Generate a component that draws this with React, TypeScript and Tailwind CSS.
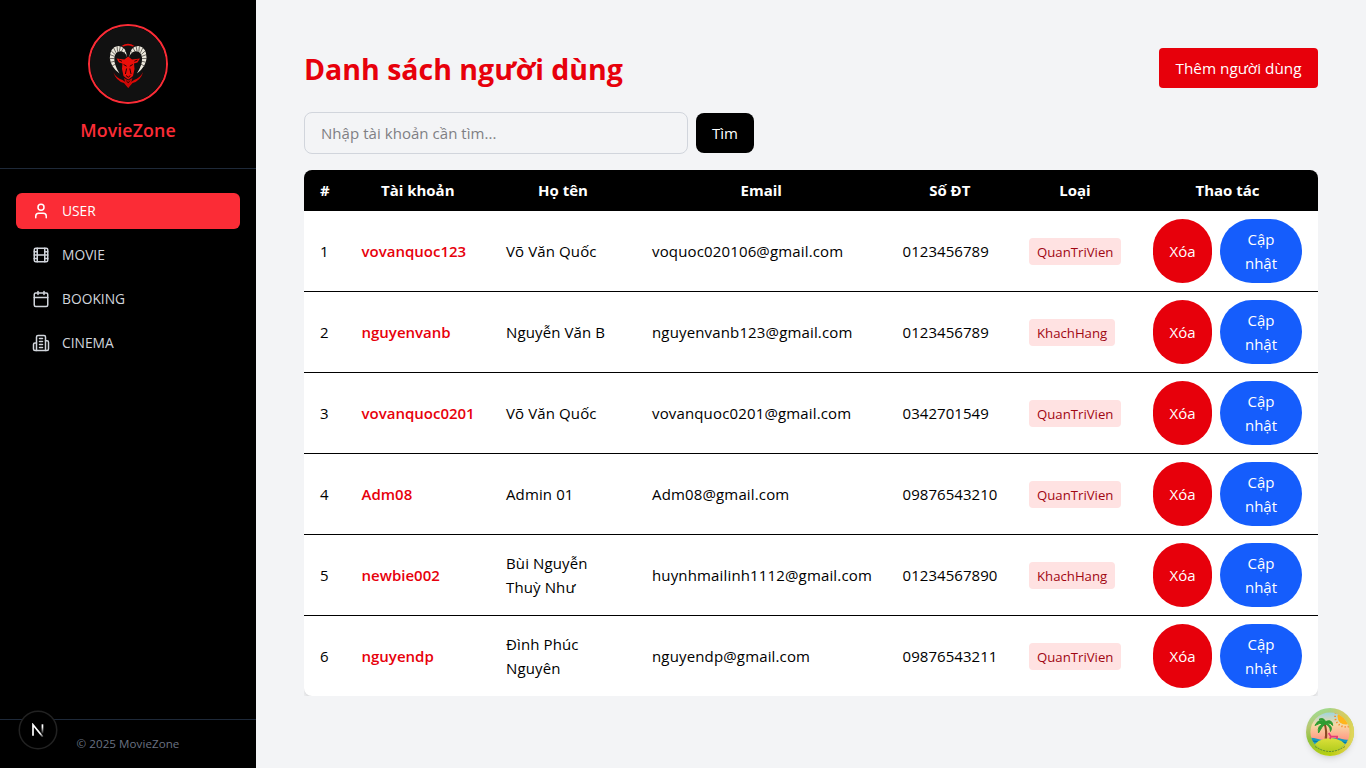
import { User, Film, Calendar } from "lucide-react";

function Building({ size = 18 }: { size?: number }) {
  return (
    <svg
      width={size}
      height={size}
      viewBox="0 0 24 24"
      fill="none"
      stroke="currentColor"
      strokeWidth="2"
      strokeLinecap="round"
      strokeLinejoin="round"
    >
      <path d="M6 22V4a2 2 0 0 1 2-2h8a2 2 0 0 1 2 2v18Z" />
      <path d="M6 12H4a2 2 0 0 0-2 2v6a2 2 0 0 0 2 2h2" />
      <path d="M18 9h2a2 2 0 0 1 2 2v9a2 2 0 0 1-2 2h-2" />
      <path d="M10 6h4" />
      <path d="M10 10h4" />
      <path d="M10 14h4" />
      <path d="M10 18h4" />
    </svg>
  );
}

const nav = [
  { label: "USER", Icon: User, active: true },
  { label: "MOVIE", Icon: Film, active: false },
  { label: "BOOKING", Icon: Calendar, active: false },
  { label: "CINEMA", Icon: Building, active: false },
];

const users = [
  { account: "vovanquoc123", name: "Võ Văn Quốc", email: "voquoc020106@gmail.com", phone: "0123456789", role: "QuanTriVien" },
  { account: "nguyenvanb", name: "Nguyễn Văn B", email: "nguyenvanb123@gmail.com", phone: "0123456789", role: "KhachHang" },
  { account: "vovanquoc0201", name: "Võ Văn Quốc", email: "vovanquoc0201@gmail.com", phone: "0342701549", role: "QuanTriVien" },
  { account: "Adm08", name: "Admin 01", email: "Adm08@gmail.com", phone: "09876543210", role: "QuanTriVien" },
  { account: "newbie002", name: "Bùi Nguyễn Thuỳ Như", email: "huynhmailinh1112@gmail.com", phone: "01234567890", role: "KhachHang" },
  { account: "nguyendp", name: "Đình Phúc Nguyên", email: "nguyendp@gmail.com", phone: "09876543211", role: "QuanTriVien" },
];

function Horn() {
  return (
    <>
      <path
        d="M37.2 31.5Q35.5 25.5 30.5 25.3Q25 25.5 24.3 32Q24 39 29.5 47.5Q20.5 41 19.8 32Q20 21.5 27.5 20Q36 19.5 37.2 31.5Z"
        fill="#ece8dc"
      />
      <path
        d="M35.8 25L33 27.8M33.4 22L31 26M30.4 20L29.2 25.6M27 19.8L27.6 25.8M23.6 21.8L26 26.8M21.2 25L25 28.4M20 28.6L24.6 30.4M19.4 32.4L24.6 32.6M20 36.4L24.8 35.2M21.6 40.2L25.8 38"
        stroke="#33312c"
        strokeWidth="0.7"
      />
    </>
  );
}

function Logo() {
  return (
    <svg viewBox="0 0 76 76" className="size-full">
      <circle cx="38" cy="38" r="38" fill="#111111" />
      <path d="M31.5 20Q38 15.5 44.5 20L42.5 20.6Q38 18.4 33.5 20.6Z" fill="#e3100c" />
      <path d="M23.3 46Q26 55 34 57L38.2 62L42.5 57Q50.5 55 53.2 46Q50 52 44 54L38.2 58L32.5 54Q26 52 23.3 46Z" fill="#dd0806" />
      <Horn />
      <g transform="matrix(-1 0 0 1 76.4 0)">
        <Horn />
      </g>
      <path d="M38.2 30.5L42 33.5L50 32.5L47.5 36.5L44 37.5L44.5 43L43 50L40.5 52L38.2 53.5L36 52L33.5 50L32 43L32.4 37.5L29 36.5L26.5 32.5L34.4 33.5Z" fill="#ea0f0a" />
      <path d="M29 34L32 35.3M47.4 34L44.4 35.3M33.6 38.5L36.6 40.2M42.8 38.5L39.8 40.2M36.6 42.5L35.4 48M39.8 42.5L41 48M36 49.5L38.2 51.3L40.4 49.5" stroke="#260303" strokeWidth="1" fill="none" />
      <path d="M34 52L38.2 54.6L42.4 52L41 57L38.2 61.5L35.4 57Z" fill="#c90806" />
      <path d="M36.4 54.5L38.2 57L40 54.5" stroke="#260303" strokeWidth="0.8" fill="none" />
    </svg>
  );
}

function Island() {
  return (
    <svg viewBox="0 0 48 48" className="size-12">
      <defs>
        <linearGradient id="ring" x1="0" y1="0" x2="0.4" y2="1">
          <stop offset="0" stopColor="#8fe5a0" />
          <stop offset="0.35" stopColor="#b9c873" />
          <stop offset="0.6" stopColor="#8fc33c" />
          <stop offset="1" stopColor="#b7cf10" />
        </linearGradient>
        <linearGradient id="ring2" x1="0" y1="0" x2="1" y2="0">
          <stop offset="0.5" stopColor="#f7c65c" stopOpacity="0" />
          <stop offset="1" stopColor="#e3d75e" />
        </linearGradient>
        <linearGradient id="sky" x1="0" y1="0" x2="0" y2="1">
          <stop offset="0" stopColor="#7fd3f3" />
          <stop offset="0.35" stopColor="#f8d9a4" />
          <stop offset="0.65" stopColor="#ff9c86" />
        </linearGradient>
        <linearGradient id="hill" x1="0" y1="0" x2="0" y2="1">
          <stop offset="0" stopColor="#dce03a" />
          <stop offset="1" stopColor="#a3c514" />
        </linearGradient>
        <clipPath id="inner"><circle cx="24" cy="24" r="19.6" /></clipPath>
      </defs>
      <circle cx="24" cy="24" r="24" fill="url(#ring)" />
      <circle cx="24" cy="24" r="24" fill="url(#ring2)" />
      <g clipPath="url(#inner)">
        <rect width="48" height="48" fill="url(#sky)" />
        <circle cx="39.5" cy="8.5" r="8" fill="#ffb51c" />
        <circle cx="39.5" cy="8.5" r="10.4" fill="none" stroke="#f58a2c" strokeWidth="1.8" strokeDasharray="1.2 2" />
        <path d="M0 30Q6 29 12 31T24 31T36 31T48 30V48H0Z" fill="#149bc0" />
        <path d="M0 34Q6 32 12 34T24 34T36 34T48 33" stroke="#087aa0" strokeWidth="1.2" fill="none" />
        <path d="M5 41Q12 30 24 30Q36 30 43 41L38 48H10Z" fill="url(#hill)" />
        <path d="M18.6 30.5Q20 23 17.4 15L19.4 15Q22 23 21 30.5Z" fill="#8b4a24" />
        <path
          d="M18.5 14.5Q13 9.5 9 17.5Q13.5 14.5 18 15.5Q11 17 12.5 25Q16 18.5 18.8 16Q24 17 24.5 23.5Q27.5 18.5 20.5 15Q25 14.5 26.8 17.5Q26 10.5 19.6 13.6Q17.5 9 13 11.3Q17 11.8 18.5 14.5Z"
          fill="#2f9c31"
          stroke="#2f9c31"
          strokeWidth="1"
        />
        <path d="M22.6 25L25 28.6H32M25 28L24 31M31 29V31" stroke="#e43d76" strokeWidth="1.7" fill="none" />
      </g>
      <path d="M9 38.5Q24 48.5 39 38.5" fill="none" stroke="#5c8d12" strokeWidth="0.8" strokeDasharray="2 1" />
    </svg>
  );
}

export default function App() {
  return (
    <div className="flex h-screen overflow-hidden bg-gray-100 font-['Open_Sans','Noto_Sans',sans-serif] text-[15px] leading-6 text-black">
      <aside className="flex w-64 shrink-0 flex-col bg-black">
        <div className="flex flex-col items-center border-b border-gray-800 p-6">
          <div className="size-20 overflow-hidden rounded-full border-2 border-[#fb2c36]">
            <Logo />
          </div>
          <h2 className="mt-3 text-[17.8px] leading-[29px] -mb-px font-semibold tracking-[0.1px] text-[#fb2c36]">MovieZone</h2>
        </div>
        <nav className="flex flex-1 flex-col gap-2 px-4 py-6">
          {nav.map(({ label, Icon, active }) => (
            <a
              key={label}
              className={
                active
                  ? "flex h-9 items-center gap-3 rounded-md bg-[#fb2c36] px-4 text-[13.8px] text-white"
                  : "flex h-9 items-center gap-3 rounded-md px-4 text-[13.8px] text-gray-300"
              }
            >
              <Icon size={18} />
              <span>{label}</span>
            </a>
          ))}
        </nav>
        <div className="border-t border-gray-800 p-4 text-center text-[11.6px] leading-4 tracking-[0.05px] text-gray-500">
          <p>© 2025 MovieZone</p>
        </div>
      </aside>

      <main className="flex-1 p-12">
        <div className="flex h-10 items-center justify-between">
          <h1 className="pt-0.5 text-[28.5px] leading-9 font-bold text-[#e7000b]">Danh sách người dùng</h1>
          <button className="h-10 w-[159px] rounded bg-[#e7000b] text-[15.3px] text-white">Thêm người dùng</button>
        </div>
        <div className="mt-6 flex items-center gap-2">
          <input
            className="h-[42px] w-96 rounded-lg border border-gray-300 px-4 tracking-[0.05px] placeholder:text-[#7f7f84]"
            placeholder="Nhập tài khoản cần tìm..."
          />
          <button className="h-10 w-[58px] rounded-lg bg-black text-white">Tìm</button>
        </div>
        <div className="mt-4 overflow-hidden">
          <div className="overflow-hidden rounded-lg bg-white shadow-md">
            <table className="w-full table-fixed border-collapse">
              <colgroup>
                <col className="w-[41.5px]" />
                <col className="w-[144.5px]" />
                <col className="w-[146px]" />
                <col className="w-[250.5px]" />
                <col className="w-[126.5px]" />
                <col className="w-[124px]" />
                <col className="w-[181px]" />
              </colgroup>
              <thead className="bg-black text-white">
                <tr className="h-[41px]">
                  {["#", "Tài khoản", "Họ tên", "Email", "Số ĐT", "Loại", "Thao tác"].map((h) => (
                    <th key={h} className="p-0 pb-0.5 font-bold">{h}</th>
                  ))}
                </tr>
              </thead>
              <tbody>
                {users.map((u, i) => (
                  <tr key={u.account} className="border-b border-black last:border-b-0">
                    <td className="px-4 py-2">{i + 1}</td>
                    <td className="px-4 py-2 font-semibold text-[#e7000b]">{u.account}</td>
                    <td className="px-4 py-2 tracking-[0.12px]">{u.name}</td>
                    <td className="px-4 py-2 tracking-[0.15px]">{u.email}</td>
                    <td className="px-4 py-2 tracking-[0.05px]">{u.phone}</td>
                    <td className="px-4 py-2">
                      <span className="inline-block rounded bg-[#ffe2e2] px-2 pt-[5px] pb-[3px] text-[13.2px] leading-[19px] text-[#9f0712]">{u.role}</span>
                    </td>
                    <td className="px-4 py-2">
                      <div className="flex gap-2">
                        <button className="h-16 w-[59px] shrink-0 rounded-[32px] bg-[#e7000b] text-white">Xóa</button>
                        <button className="h-16 w-[82px] shrink-0 rounded-[32px] bg-[#155dfc] px-4 text-white">Cập nhật</button>
                      </div>
                    </td>
                  </tr>
                ))}
              </tbody>
            </table>
          </div>
        </div>
      </main>

      <div className="fixed bottom-5 left-5 flex size-9 items-center justify-center rounded-full bg-black ring-[1.5px] ring-[#222222]">
        <svg viewBox="0 0 14 14" className="size-3.5" fill="none">
          <defs>
            <linearGradient id="fade" x1="0" y1="0" x2="0" y2="1">
              <stop offset="0.3" stopColor="#fff" />
              <stop offset="1" stopColor="#fff" stopOpacity="0.1" />
            </linearGradient>
            <linearGradient id="diag" gradientUnits="userSpaceOnUse" x1="2" y1="2" x2="12" y2="14">
              <stop offset="0.7" stopColor="#fff" />
              <stop offset="1" stopColor="#fff" stopOpacity="0.2" />
            </linearGradient>
          </defs>
          <path d="M2 12.8V1.8L11.8 13.8" stroke="url(#diag)" strokeWidth="1.7" />
          <rect x="10.6" y="1.3" width="1.7" height="9.2" fill="url(#fade)" />
        </svg>
      </div>
      <div className="fixed right-3 bottom-3 size-12 rounded-full shadow-md">
        <Island />
      </div>
    </div>
  );
}
